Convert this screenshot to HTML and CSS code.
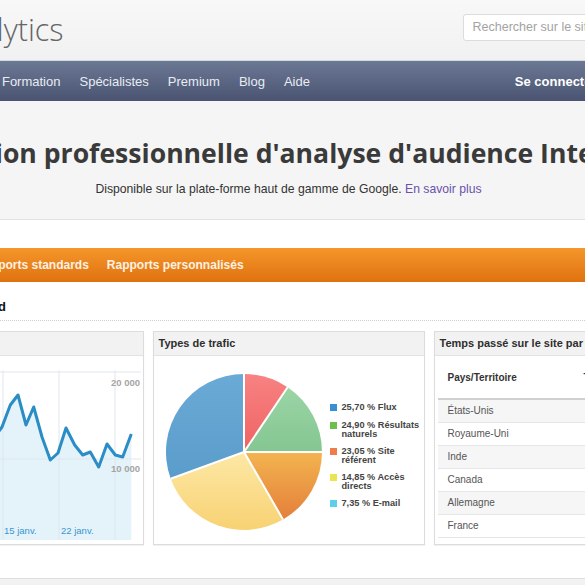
FILE: index.html
```html
<!DOCTYPE html>
<html lang="fr">
<head>
<meta charset="utf-8">
<title>Google Analytics</title>
<link rel="stylesheet" href="styles.css">
</head>
<body>
<header class="top">
  <div class="wrap top-inner">
    <div class="logo"><span class="logo-text">Google Analytics</span></div>
    <div class="search">Rechercher sur le site</div>
  </div>
</header>
<nav class="nav">
  <div class="wrap nav-inner">
    <a class="nav-item">Fonctionnalités</a>
    <a class="nav-item">Formation</a>
    <a class="nav-item">Spécialistes</a>
    <a class="nav-item">Premium</a>
    <a class="nav-item">Blog</a>
    <a class="nav-item">Aide</a>
    <a class="nav-login">Se connecter</a>
  </div>
</nav>
<section class="hero">
  <div class="wrap hero-inner">
    <h1 class="hero-title">Solution professionnelle d'analyse d'audience Internet</h1>
    <p class="hero-sub">Disponible sur la plate-forme haut de gamme de Google. <a class="hero-link">En savoir plus</a></p>
  </div>
</section>
<main class="wrap main">
  <div class="tabs">
    <span class="tab">Rapports standards</span>
    <span class="tab">Rapports personnalisés</span>
  </div>
  <h2 class="section-title">Tableau de bord</h2>
  <div class="cards">
    <div class="card">
      <div class="card-head">Visites</div>
      <div class="card-body">
        <svg class="line-chart" width="270" height="189" viewBox="-129 356 270 189">
          <polygon class="area" points="-123,540 -123,500 -115,490 -107,495 -98,478 -90,470 -82,484 -74,462 -66,450 -57,470 -49,458 -41,440 -33,452 -24,430 -16,445 -8,438 0,427 8.3,405 16,395 24,425 31.7,407 40,437 48.3,460 56,453 64,428 72.7,445 80.7,455 88.3,452 96.7,467 105,444 113.3,455 120.7,457 129.3,434 129.3,540"/>
          <line class="grid" x1="-111" y1="370" x2="-111" y2="540"/>
          <line class="grid" x1="-55" y1="370" x2="-55" y2="540"/>
          <line class="grid" x1="1" y1="370" x2="1" y2="540"/>
          <line class="grid" x1="57" y1="370" x2="57" y2="540"/>
          <line class="grid" x1="113" y1="370" x2="113" y2="540"/>
          <line class="grid" x1="-125" y1="372" x2="139" y2="372"/>
          <line class="grid" x1="-125" y1="459" x2="139" y2="459"/>
          <polyline class="line" points="-123,500 -115,490 -107,495 -98,478 -90,470 -82,484 -74,462 -66,450 -57,470 -49,458 -41,440 -33,452 -24,430 -16,445 -8,438 0,427 8.3,405 16,395 24,425 31.7,407 40,437 48.3,460 56,453 64,428 72.7,445 80.7,455 88.3,452 96.7,467 105,444 113.3,455 120.7,457 129.3,434"/>
          <text class="ylab" x="138" y="386">20 000</text>
          <text class="ylab" x="138" y="472">10 000</text>
          <text class="xlab" x="-110" y="534">1 janv.</text>
          <text class="xlab" x="-54" y="534">8 janv.</text>
          <text class="xlab" x="2" y="534">15 janv.</text>
          <text class="xlab" x="59" y="534">22 janv.</text>
        </svg>
      </div>
    </div>
    <div class="card">
      <div class="card-head">Types de trafic</div>
      <div class="card-body pie-body">
        <svg class="pie" width="160" height="160" viewBox="0 0 160 160">
          <defs>
            <linearGradient id="gr" x1="0" y1="0" x2="0" y2="1"><stop offset="0" stop-color="#f88282"/><stop offset="1" stop-color="#ef6363"/></linearGradient>
            <linearGradient id="gg" x1="0" y1="0" x2="0" y2="1"><stop offset="0" stop-color="#9bd5a5"/><stop offset="1" stop-color="#84c692"/></linearGradient>
            <linearGradient id="go" x1="0" y1="0" x2="0" y2="1"><stop offset="0" stop-color="#f3b450"/><stop offset="1" stop-color="#e47f3a"/></linearGradient>
            <linearGradient id="gy" x1="0" y1="0" x2="0" y2="1"><stop offset="0" stop-color="#fde8a6"/><stop offset="1" stop-color="#f8d273"/></linearGradient>
            <linearGradient id="gb" x1="0" y1="0" x2="0" y2="1"><stop offset="0" stop-color="#6aaad6"/><stop offset="1" stop-color="#5a9ccb"/></linearGradient>
          </defs>
          <path fill="url(#gr)" d="M80,80 L80,2 A78,78 0 0 1 123.6,15.3 Z"/>
          <path fill="url(#gg)" d="M80,80 L123.6,15.3 A78,78 0 0 1 158,80 Z"/>
          <path fill="url(#go)" d="M80,80 L158,80 A78,78 0 0 1 119,147.5 Z"/>
          <path fill="url(#gy)" d="M80,80 L119,147.5 A78,78 0 0 1 6.7,106.7 Z"/>
          <path fill="url(#gb)" d="M80,80 L6.7,106.7 A78,78 0 0 1 80,2 Z"/>
          <g class="sep">
            <line x1="80" y1="80" x2="80" y2="2"/>
            <line x1="80" y1="80" x2="123.6" y2="15.3"/>
            <line x1="80" y1="80" x2="158" y2="80"/>
            <line x1="80" y1="80" x2="119" y2="147.5"/>
            <line x1="80" y1="80" x2="6.7" y2="106.7"/>
          </g>
        </svg>
        <ul class="legend">
          <li class="legend-item"><span class="sw sw-blue"></span><span class="legend-text">25,70 % Flux</span></li>
          <li class="legend-item"><span class="sw sw-green"></span><span class="legend-text">24,90 % Résultats naturels</span></li>
          <li class="legend-item"><span class="sw sw-orange"></span><span class="legend-text">23,05 % Site référent</span></li>
          <li class="legend-item"><span class="sw sw-yellow"></span><span class="legend-text">14,85 % Accès directs</span></li>
          <li class="legend-item"><span class="sw sw-cyan"></span><span class="legend-text">7,35 % E-mail</span></li>
        </ul>
      </div>
    </div>
    <div class="card">
      <div class="card-head">Temps passé sur le site par pays</div>
      <div class="card-body table-body">
        <table class="ctable">
          <thead>
            <tr><th class="c1">Pays/Territoire</th><th class="c2">Temps moyen passé sur le site</th></tr>
          </thead>
          <tbody>
            <tr><td>États-Unis</td><td>00:05:12</td></tr>
            <tr><td>Royaume-Uni</td><td>00:04:48</td></tr>
            <tr><td>Inde</td><td>00:06:02</td></tr>
            <tr><td>Canada</td><td>00:04:31</td></tr>
            <tr><td>Allemagne</td><td>00:05:27</td></tr>
            <tr><td>France</td><td>00:04:55</td></tr>
          </tbody>
        </table>
      </div>
    </div>
  </div>
</main>
<footer class="foot"></footer>
</body>
</html>
```

FILE: styles.css
```css
html, body {
  margin: 0;
  padding: 0;
  overflow: hidden;
  background: #ffffff;
  font-family: "Liberation Sans", Arial, sans-serif;
}

.wrap {
  width: 836px;
  margin-left: calc(50% - 422px);
}

/* header */
.top {
  height: 60px;
  background: linear-gradient(#f8f8f8, #f1f1f1);
}
.top-inner {
  display: flex;
  align-items: flex-start;
}
.logo {
  width: 193px;
  flex: none;
  display: flex;
  justify-content: flex-end;
  margin-top: 9px;
}
.logo-text {
  flex: none;
  white-space: nowrap;
  font-family: "Open Sans", sans-serif;
  font-weight: 300;
  font-size: 30.5px;
  line-height: 40px;
  color: #666666;
}
.search {
  margin-left: 399px;
  margin-top: 14px;
  width: 190px;
  height: 25px;
  box-sizing: content-box;
  border: 1px solid #dcdcdc;
  border-radius: 3px;
  background: #fff;
  color: #a3a3a3;
  font-size: 12.5px;
  line-height: 25px;
  padding-left: 9px;
  white-space: nowrap;
}

/* nav */
.nav {
  height: 40px;
  border-top: 1px solid #d3d8e2;
  background: linear-gradient(#6b7894, #4a5472);
}
.nav-inner {
  display: flex;
  align-items: center;
  height: 40px;
  padding-left: 25px;
  box-sizing: border-box;
  gap: 19px;
}
.nav-item {
  color: #e9ecf2;
  font-size: 13px;
  white-space: nowrap;
}
.nav-login {
  margin-left: auto;
  margin-right: 110px;
  color: #ffffff;
  font-weight: bold;
  font-size: 13px;
  white-space: nowrap;
}

/* hero */
.hero {
  height: 118px;
  background: #f5f5f5;
  border-bottom: 1px solid #e2e2e2;
}
.hero-inner {
  text-align: center;
  padding-top: 35px;
  box-sizing: border-box;
}
.hero-title {
  margin: 0;
  font-family: "Open Sans", sans-serif;
  font-weight: 700;
  font-size: 26.6px;
  line-height: 34px;
  color: #3a3a3a;
  white-space: nowrap;
}
.hero-sub {
  margin: 11px 0 0;
  font-size: 12.2px;
  line-height: 16px;
  color: #333;
}
.hero-link {
  color: #6a51aa;
}

/* main */
.main {
  padding-top: 28px;
}
.tabs {
  height: 34px;
  display: flex;
  align-items: center;
  gap: 18px;
  padding-left: 105px;
  border-radius: 4px 4px 0 0;
  background: linear-gradient(#f5962a, #df7210);
}
.tab {
  color: #fdf1e4;
  font-weight: bold;
  font-size: 12px;
  white-space: nowrap;
}
.section-title {
  margin: 0;
  padding: 16px 0 5px 36px;
  font-size: 13px;
  line-height: 17px;
  font-weight: bold;
  color: #111;
  border-bottom: 1px dotted #cfcfcf;
}

.cards {
  display: grid;
  grid-template-columns: 272px 272px 272px;
  column-gap: 9px;
  margin: 10px 0 0 1px;
}
.card {
  height: 214px;
  box-sizing: border-box;
  border: 1px solid #dcdcdc;
  background: #fff;
  box-shadow: 0 1px 1px rgba(0,0,0,0.05);
  display: flex;
  flex-direction: column;
}
.card-head {
  height: 23px;
  line-height: 23px;
  background: #f2f2f2;
  border-bottom: 1px solid #e2e2e2;
  padding-left: 5px;
  font-weight: bold;
  font-size: 11px;
  color: #2e2e2e;
  white-space: nowrap;
  overflow: hidden;
}
.card-body {
  flex: 1;
  overflow: hidden;
}

/* line chart */
.line-chart { display: block; }
.area { fill: #e4f2fa; }
.grid { stroke: #dfe7ec; stroke-width: 1; }
.line { fill: none; stroke: #2a8dc5; stroke-width: 3; stroke-linejoin: round; }
.ylab { font-size: 9.5px; font-weight: bold; fill: #a5a5a5; text-anchor: end; font-family: "Liberation Sans", Arial, sans-serif; }
.xlab { font-size: 9.5px; fill: #3a97cf; font-family: "Liberation Sans", Arial, sans-serif; }

/* pie */
.pie-body {
  display: flex;
  align-items: flex-start;
  padding: 0 0 0 10px;
}
.pie { display: block; flex: none; margin-top: 16px; }
.sep line { stroke: #fff; stroke-width: 2; }
.legend {
  list-style: none;
  margin: 47px 0 0 6px;
  padding: 0;
  display: flex;
  flex-direction: column;
  gap: 8px;
}
.legend-item {
  display: flex;
  align-items: flex-start;
}
.legend-item:first-child { margin-bottom: 1px; }
.sw {
  width: 7px;
  height: 7px;
  flex: none;
  margin: 1px 5px 0 0;
}
.sw-blue { background: #3b8fd1; }
.sw-green { background: #6ec04c; }
.sw-orange { background: #ef7c4b; }
.sw-yellow { background: #e8e64c; }
.sw-cyan { background: #5dd0e9; }
.legend-text {
  width: 80px;
  font-size: 9.2px;
  line-height: 9px;
  font-weight: bold;
  color: #444;
}

/* table */
.table-body {
  padding: 0 3px;
}
.ctable {
  border-collapse: collapse;
  width: 400px;
  table-layout: fixed;
  font-size: 10px;
}
.ctable th {
  height: 43px;
  box-sizing: border-box;
  text-align: left;
  font-size: 10px;
  font-weight: bold;
  color: #333;
  border-bottom: 2px solid #d0d0d0;
  padding: 0 0 0 10px;
  vertical-align: middle;
}
.ctable .c1 { width: 146px; }
.ctable .c2 { padding-left: 0; }
.ctable td {
  height: 23px;
  box-sizing: border-box;
  padding: 0 0 0 10px;
  color: #555;
  border-bottom: 1px solid #e6e6e6;
}
.ctable tbody tr:nth-child(odd) td { background: #f6f6f6; }

/* footer */
.foot {
  margin-top: 33px;
  height: 40px;
  border-top: 1px solid #dedede;
  background: #f2f2f2;
}
```
